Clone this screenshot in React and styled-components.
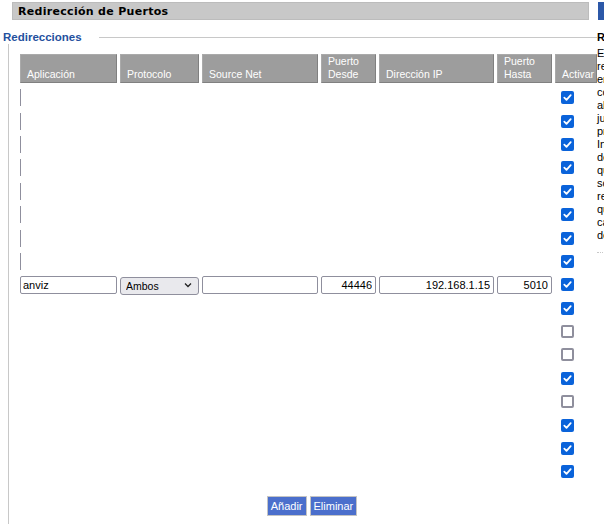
import React from "react";
import styled, { createGlobalStyle } from "styled-components";

const GlobalStyle = createGlobalStyle`
  body {
    margin: 0;
    overflow: hidden;
    background: #fff;
    font-family: "Liberation Sans", Arial, sans-serif;
  }
`;

const COLUMNS = "97px 79px 116px 55px 115px 55px 42px";

const Page = styled.div`
  display: flex;
  width: 780px;
  padding-top: 2px;
`;

const Main = styled.div`
  flex: none;
  width: 597px;
`;

const TitleBar = styled.div`
  display: flex;
  align-items: center;
  box-sizing: border-box;
  height: 18px;
  margin: 0 8px 0 12px;
  padding-left: 5px;
  background: #c8c8c8;
  border: 1px solid #bcbcbc;
  font-family: "DejaVu Sans", Verdana, sans-serif;
  font-size: 11px;
  font-weight: bold;
  letter-spacing: 0.3px;
  color: #000;
`;

const LegendRow = styled.div`
  display: flex;
  align-items: center;
  height: 14px;
  margin-top: 10px;
`;

const Legend = styled.span`
  padding-left: 3px;
  font-size: 11.5px;
  font-weight: bold;
  color: #24509e;
`;

const Rule = styled.div`
  flex: 1;
  height: 1px;
  margin-left: 17px;
  background: #c8c8c8;
`;

const Body = styled.div`
  margin-left: 8px;
  padding: 10px 0 0 11px;
  border-left: 1px solid #c8c8c8;
  height: 480px;
`;

const HeadRow = styled.div`
  display: grid;
  grid-template-columns: ${COLUMNS};
  column-gap: 3px;
  height: 29px;
`;

const HeadCell = styled.div`
  display: flex;
  align-items: flex-end;
  box-sizing: border-box;
  padding: 0 0 1px 6px;
  background: #9d9d9d;
  border: 1px solid;
  border-color: #aaaaaa #808080 #808080 #aaaaaa;
  color: #fff;
  font-size: 10.5px;
  line-height: 13px;
  white-space: nowrap;
  overflow: hidden;
`;

const Rows = styled.div`
  margin-top: 3px;
`;

const Row = styled.div`
  display: grid;
  grid-template-columns: ${COLUMNS};
  column-gap: 3px;
  align-items: center;
  height: 23.4px;
`;

const Stub = styled.span`
  display: block;
  width: 0;
  height: 17px;
  border-left: 1px solid #8f8f9d;
`;

const Field = styled.input`
  box-sizing: border-box;
  width: 100%;
  height: 18px;
  margin: 0;
  padding: 0 3px 0 2px;
  border: 1px solid #8f8f9d;
  border-radius: 2px;
  background: #fff;
  color: #000;
  font-family: "Liberation Sans", Arial, sans-serif;
  font-size: 11px;
  text-align: ${({ $right }) => ($right ? "right" : "left")};
  outline: none;
`;

const SelectWrap = styled.div`
  position: relative;
  height: 18px;
`;

const Select = styled.select`
  appearance: none;
  box-sizing: border-box;
  width: 100%;
  height: 18px;
  margin: 0;
  padding: 0 0 0 5px;
  border: 1px solid #8f8f9d;
  border-radius: 3px;
  background: #e9e9ed;
  color: #000;
  font-family: "Liberation Sans", Arial, sans-serif;
  font-size: 10.5px;
  outline: none;
`;

const Chevron = styled.svg`
  position: absolute;
  right: 7px;
  top: 6px;
  pointer-events: none;
`;

const CheckCell = styled.div`
  padding-left: 6px;
  display: flex;
  align-items: center;
`;

const Box = styled.span`
  display: inline-flex;
  align-items: center;
  justify-content: center;
  box-sizing: border-box;
  width: 13px;
  height: 13px;
  border-radius: 2px;
  background: ${({ $on }) => ($on ? "#0a63da" : "#fff")};
  border: ${({ $on }) => ($on ? "none" : "2px solid #8f8f9d")};
`;

const Buttons = styled.div`
  display: flex;
  justify-content: center;
  gap: 3px;
  width: 576px;
  padding-left: 4px;
  margin-top: 12px;
`;

const Button = styled.button`
  box-sizing: border-box;
  height: 20px;
  margin: 0;
  padding: 0 3px;
  border: 1px solid #c4c4c4;
  background: #4b6fcc;
  color: #fff;
  font-family: "Liberation Sans", Arial, sans-serif;
  font-size: 11px;
  cursor: pointer;
`;

const Side = styled.div`
  flex: none;
  width: 170px;
`;

const SideBar = styled.div`
  height: 18px;
  margin-left: 1px;
  background: #2c58a8;
`;

const SideTitle = styled.div`
  margin-top: 11px;
  font-size: 11px;
  font-weight: bold;
  line-height: 13px;
  color: #000;
`;

const SideText = styled.div`
  margin-top: 3px;
  font-size: 11px;
  line-height: 13px;
  color: #000;
  white-space: nowrap;
`;

const SideLine = styled.div``;

const Dotted = styled.div`
  margin-top: 10px;
  border-top: 1px dotted #c8c8c8;
`;

const headers = [
  ["Aplicación"],
  ["Protocolo"],
  ["Source Net"],
  ["Puerto", "Desde"],
  ["Dirección IP"],
  ["Puerto", "Hasta"],
  ["Activar"],
];

const entry = {
  app: "anviz",
  proto: "Ambos",
  source: "",
  from: "44446",
  ip: "192.168.1.15",
  to: "5010",
};

const rows = [
  ...Array.from({ length: 8 }, () => ({ stub: true, on: true })),
  { entry, on: true },
  ...[true, false, false, true, false, true, true, true].map((on) => ({ on })),
];

const helpLines = [
  "En esta sección puede",
  "redirigir puertos",
  "entrantes del router a",
  "computadoras de su red,",
  "algo necesario para",
  "juegos en línea o",
  "programas P2P.",
  "Indique el rango",
  "de puertos y la IP",
  "que recibirá las",
  "solicitudes. Cada",
  "regla se puede activar",
  "quitando o marcando",
  "cada casilla",
  "de esta tabla.",
];

const Check = ({ on }) => (
  <Box $on={on}>
    {on && (
      <svg width="9" height="9" viewBox="0 0 9 9">
        <path
          d="M1.3 4.7 L3.5 6.8 L7.7 2.2"
          fill="none"
          stroke="#fff"
          strokeWidth="1.8"
          strokeLinecap="round"
          strokeLinejoin="round"
        />
      </svg>
    )}
  </Box>
);

const EntryCells = ({ data }) => (
  <>
    <Field defaultValue={data.app} />
    <SelectWrap>
      <Select defaultValue={data.proto}>
        <option>TCP</option>
        <option>UDP</option>
        <option>Ambos</option>
      </Select>
      <Chevron width="8" height="6" viewBox="0 0 8 6">
        <polyline
          points="1,1.5 4,4.5 7,1.5"
          fill="none"
          stroke="#222"
          strokeWidth="1.3"
        />
      </Chevron>
    </SelectWrap>
    <Field defaultValue={data.source} />
    <Field $right defaultValue={data.from} />
    <Field $right defaultValue={data.ip} />
    <Field $right defaultValue={data.to} />
  </>
);

const App = () => (
  <Page>
    <GlobalStyle />
    <Main>
      <TitleBar>Redirección de Puertos</TitleBar>
      <LegendRow>
        <Legend>Redirecciones</Legend>
        <Rule />
      </LegendRow>
      <Body>
        <HeadRow>
          {headers.map((lines) => (
            <HeadCell key={lines.join(" ")}>
              <div>
                {lines.map((line) => (
                  <div key={line}>{line}</div>
                ))}
              </div>
            </HeadCell>
          ))}
        </HeadRow>
        <Rows>
          {rows.map((row, i) => (
            <Row key={i}>
              {row.entry ? (
                <EntryCells data={row.entry} />
              ) : (
                <>
                  <div>{row.stub && <Stub />}</div>
                  <div />
                  <div />
                  <div />
                  <div />
                  <div />
                </>
              )}
              <CheckCell>
                <Check on={row.on} />
              </CheckCell>
            </Row>
          ))}
        </Rows>
        <Buttons>
          <Button>Añadir</Button>
          <Button>Eliminar</Button>
        </Buttons>
      </Body>
    </Main>
    <Side>
      <SideBar />
      <SideTitle>Redirección de Puertos</SideTitle>
      <SideText>
        {helpLines.map((line) => (
          <SideLine key={line}>{line}</SideLine>
        ))}
      </SideText>
      <Dotted />
    </Side>
  </Page>
);

export default App;
